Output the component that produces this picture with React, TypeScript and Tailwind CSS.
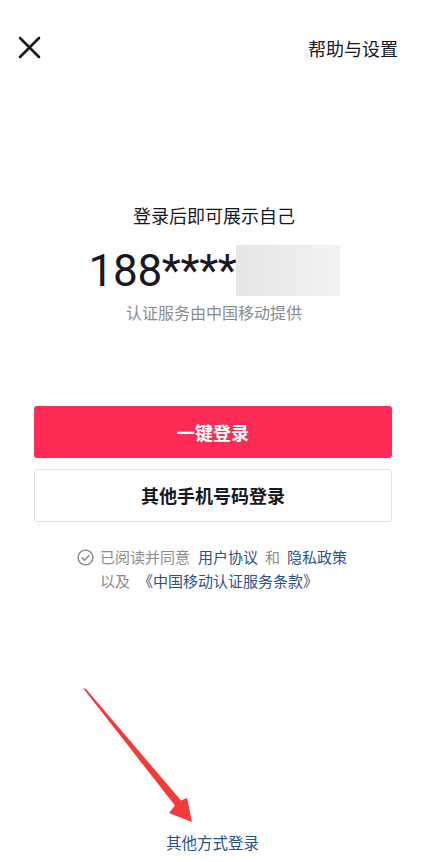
export default function App() {
  return (
    <div
      className="relative w-[430px] h-[862px] bg-white overflow-hidden flex flex-col"
      style={{ fontFamily: '"Noto Sans CJK SC", "Noto Sans", sans-serif' }}
    >
      {/* header */}
      <div className="flex items-center justify-between pt-[36px] pl-[17px] pr-[32px] h-[60px]">
        <svg width="24" height="24" viewBox="0 0 24 24" fill="none">
          <path d="M3 2L22 21M22 2L3 21" stroke="#161823" strokeWidth="2.6" strokeLinecap="round" />
        </svg>
        <span className="text-[18px] text-[#161823] leading-none">帮助与设置</span>
      </div>

      {/* account */}
      <div className="flex flex-col items-center mt-[146px] pr-[2px]">
        <p className="text-[18px] text-[#161823] leading-none">登录后即可展示自己</p>
        <div className="flex items-center mt-[21px] ml-[1px]">
          <span
            className="text-[44px] leading-none text-[#161823] tracking-[-0.3px]"
            style={{ fontFamily: 'Roboto, "Noto Sans", sans-serif' }}
          >
            188****
          </span>
          <div className="w-[104px] h-[51px] bg-gradient-to-r from-[#e6e6e8] to-[#f2f2f3]" />
        </div>
        <p className="text-[16px] text-[#8a8b91] leading-none mt-[8px]">认证服务由中国移动提供</p>
      </div>

      {/* buttons */}
      <div className="flex flex-col gap-[11px] ml-[34px] w-[358px] mt-[86px]">
        <button className="h-[52px] rounded-[3px] bg-[#fe2c55] text-white text-[18px] font-semibold">
          一键登录
        </button>
        <button className="h-[53px] rounded-[3px] border border-[#e3e3e6] bg-white text-[#161823] text-[18px] font-semibold">
          其他手机号码登录
        </button>
      </div>

      {/* agreement */}
      <div className="flex justify-center mt-[23px] pr-[6px] text-[15px] leading-[24px] text-[#8a8b91]">
        <svg width="17" height="17" viewBox="0 0 20 20" fill="none" className="mr-[6px] mt-[3.5px] shrink-0">
          <circle cx="10" cy="10" r="8.7" stroke="#86878d" strokeWidth="1.7" />
          <path d="M5.9 10.2L8.8 13.1L14.1 7.6" stroke="#86878d" strokeWidth="1.7" strokeLinecap="round" strokeLinejoin="round" />
        </svg>
        <div className="flex flex-col">
          <div className="flex items-center">
            <span>已阅读并同意</span>
            <span className="text-[#2b5286] ml-[8px]">用户协议</span>
            <span className="mx-[7px]">和</span>
            <span className="text-[#2b5286]">隐私政策</span>
          </div>
          <div className="flex items-center">
            <span>以及</span>
            <span className="text-[#2b5286] ml-[8px]">《中国移动认证服务条款》</span>
          </div>
        </div>
      </div>

      <div className="flex-1" />

      <p className="text-center text-[15.5px] text-[#2b5286] leading-none mb-[12px] pr-[5px]">其他方式登录</p>

      {/* red annotation arrow */}
      <svg className="absolute left-0 top-0 pointer-events-none" width="430" height="862" viewBox="0 0 430 862">
        <path d="M83 688 L86 689 L181 800.5 L187 798 L192 822 L169 813 L175 805.5 Z" fill="#f23b3b" />
      </svg>
    </div>
  );
}
